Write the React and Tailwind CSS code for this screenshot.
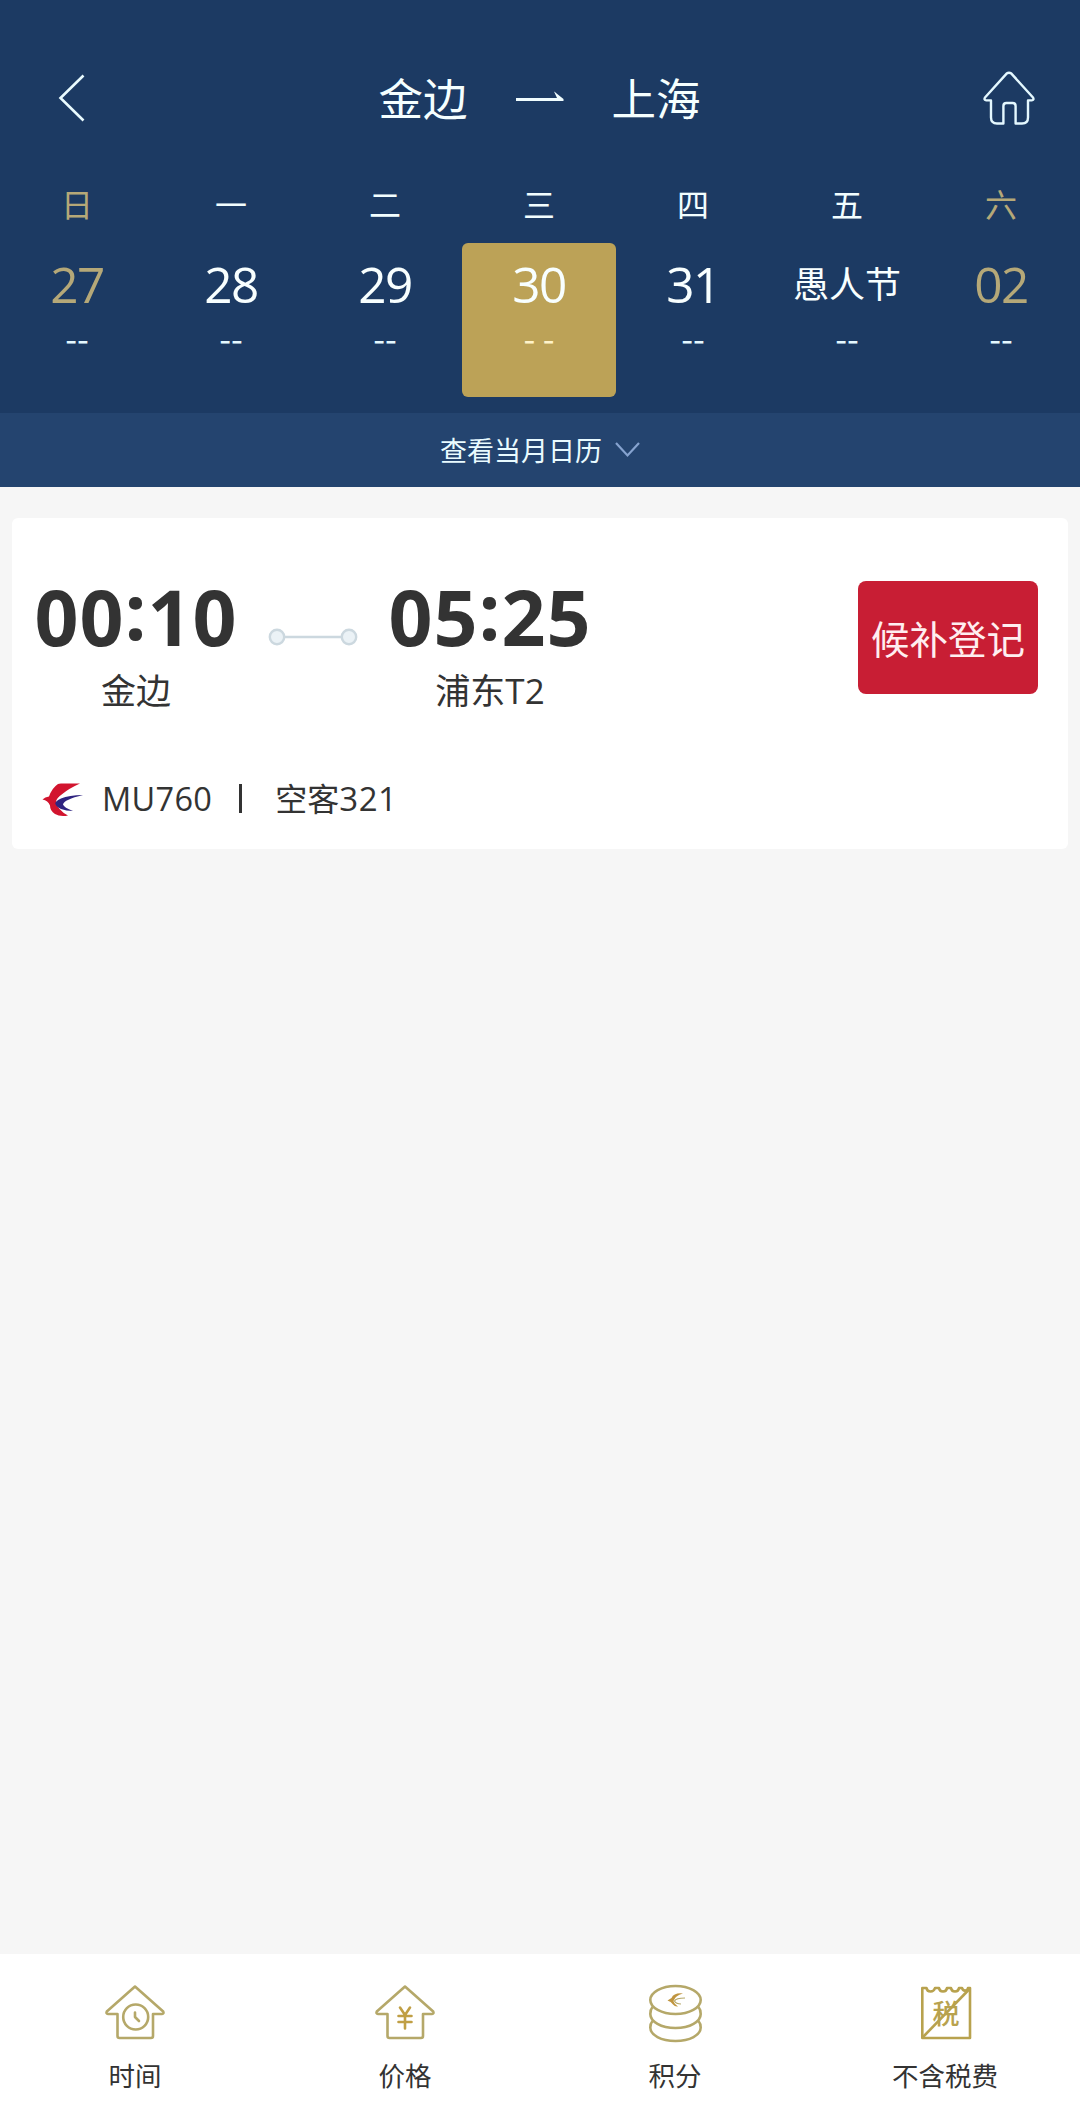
import React from 'react';

const days = [
    { week: '日', date: '27', price: '--', weekend: true },
    { week: '一', date: '28', price: '--' },
    { week: '二', date: '29', price: '--' },
    { week: '三', date: '30', price: '- -', selected: true },
    { week: '四', date: '31', price: '--' },
    { week: '五', date: '愚人节', price: '--', holiday: true },
    { week: '六', date: '02', price: '--', weekend: true },
];

const BackIcon = () => (
    <svg width="28" height="48" viewBox="0 0 28 48" fill="none" stroke="#e9fbff" strokeWidth="2.6">
        <path d="M26.5 1.5 3.500 24 26.500 46.500" />
    </svg>
);

const HomeIcon = () => (
    <svg width="52" height="54" viewBox="0 0 52 54" fill="none" stroke="#e4f8ff" strokeWidth="2.4" strokeLinejoin="round">
        <path d="M23.6 2.6Q26 .9 28.4 2.6L50 26.500Q51.4 29 48.6 29.400H45V46.500Q45 52.500 39 52.500H32.6V35Q32.6 32 29.6 32H23.4Q20.4 32 20.4 35V52.500H14Q8 52.500 8 46.500V29.400H3.4Q.6 29 2 26.500Z" />
    </svg>
);

const ArrowIcon = () => (
    <svg width="48" height="20" viewBox="0 0 48 20" fill="none" stroke="#f0fdff" strokeWidth="3">
        <path d="M0 11.5H45" />
        <path d="M38 3.500Q39.500 4 40 5L47.500 11V13H38.500L41 10Z" fill="#f0fdff" stroke="none" />
    </svg>
);

const RouteLine = () => (
    <svg width="90" height="18" viewBox="0 0 90 18" stroke="#ccd8df" strokeWidth="2.4" fill="#ebf2f6">
        <path d="M16 9H74" />
        <circle cx="9" cy="9" r="7.2" />
        <circle cx="81" cy="9" r="7.2" />
    </svg>
);

const AirlineLogo = () => (
    <svg className="mt-[2px]" width="42" height="35" viewBox="0 0 42 35">
        <path d="M16 2Q17 1.500 19 1.500H38Q27 6.500 21 11.500Q14.500 16 14 19.500Q15.500 28 26 33.500Q18 35 13 32Q8 29 8 23.500Q6 18.500 .5 17.500Q3 15 7 14.500Q10 6 16 2Z" fill="#d2142e" />
        <path d="M41 13Q27 13 19 16.500Q13.500 19 13.200 21.500Q14 24.500 19 27Q24 28.800 31 29Q22 25.500 21 22.500Q22 17.500 41 13Z" fill="#2f2480" />
    </svg>
);

const HouseOutline = ({ children }) => (
    <svg width="60" height="60" viewBox="0 0 60 60" fill="none" stroke="#b5a869" strokeWidth="2.6" strokeLinejoin="round" strokeLinecap="round">
        <path d="M30 2.500 1.800 27.500Q.8 29.800 3 30H12.500V52Q12.500 54 14.500 54H46Q48 54 48 52V30H57Q59.200 29.800 58.200 27.500Z" />
        {children}
    </svg>
);

const TimeIcon = () => (
    <HouseOutline>
        <circle cx="30.700" cy="33" r="12.500" />
        <path d="M30 28.500V33L34 37" />
    </HouseOutline>
);

const PriceIcon = () => (
    <HouseOutline>
        <path d="M25 23.500 30 31 35 23.500M30 31V44.500M23.500 32H36.500M23.500 38H36.500" stroke="#c09f45" />
    </HouseOutline>
);

const PointsIcon = () => (
    <svg width="60" height="60" viewBox="0 0 60 60" fill="none" stroke="#b5a869" strokeWidth="2.600">
        <ellipse cx="30.500" cy="16" rx="25.200" ry="14" />
        <path d="M7.500 23Q5.300 25.500 5.300 30C5.300 37.500 16 44 30.500 44S55.700 37.500 55.700 30Q55.700 25.500 53.500 23" />
        <path d="M7.500 37Q5.300 39.500 5.300 43.500C5.300 51 16 57 30.500 57S55.700 51 55.700 43.500Q55.700 39.500 53.500 37" />
        <path d="M38 9.500Q29 8.500 26.500 14L22.500 16.500Q26 17.500 28 20.500Q30 23 33 22.500Q29 19.500 28.500 17Q30 11.500 38 9.500Z" fill="#c0953f" stroke="none" />
        <path d="M40 14Q31 14 29.500 17Q31 20 36 20" strokeWidth="1.200" />
    </svg>
);

const TaxIcon = () => (
    <svg width="60" height="60" viewBox="0 0 60 60" fill="none" stroke="#b8a24e" strokeWidth="2.600" strokeLinejoin="round">
        <path d="M7.300 54V4H11.500Q12 7.500 15.500 7.500T20 4H24Q24.500 7.500 28 7.500T32 4H36Q36.500 7.500 40 7.500T44 4H47Q48 7 50.500 6.500T53 4H55V54Z" />
        <path d="M8 53 54 5.500" />
        <text x="31" y="40" textAnchor="middle" fontSize="27" fontWeight="500" fill="#b8a24e" stroke="none">税</text>
    </svg>
);

const tabs = [
    { label: '时间', Icon: TimeIcon },
    { label: '价格', Icon: PriceIcon },
    { label: '积分', Icon: PointsIcon },
    { label: '不含税费', Icon: TaxIcon },
];

const DayCell = ({ day }) => (
    <div className="flex flex-col items-center">
        <div className={`h-[50px] leading-[46px] text-[32px] ${day.weekend ? 'text-[#b5a878]' : 'text-[#f2feff]'}`}>
            {day.week}
        </div>
        <div className={`mt-[13px] pt-[6px] w-full h-[154px] rounded-md flex flex-col items-center ${day.selected ? 'bg-[#bca257]' : ''}`}>
            <div
                className={`h-[70px] whitespace-nowrap ${day.holiday ? 'text-[36px] leading-[66px]' : "text-[49.5px] leading-[70px] tracking-[-1.6px] font-['Open_Sans',sans-serif]"} ${day.weekend ? 'text-[#b5a878]' : 'text-[#f8ffff]'}`}
            >
                {day.date}
            </div>
            <div className={`h-[38px] leading-[38px] text-[34px] font-['Noto_Sans_CJK_SC',sans-serif] ${day.selected ? 'text-[#fff3c9]' : 'text-[#e4f8ff]'}`}>
                {day.price}
            </div>
        </div>
    </div>
);

// One end of the flight: time on top, airport below
const Stop = ({ hour, minute, place, terminal }) => (
    <div className="w-[204px] flex flex-col items-center">
        <div className="h-[80px] leading-[85px] text-[77px] font-bold flex tracking-[1px] font-['Open_Sans',sans-serif]">
            <span>{hour}</span>
            <span className="relative -top-[6px]">:</span>
            <span>{minute}</span>
        </div>
        <div className="mt-[10px] h-[50px] leading-[50px] text-[35px]">
            {place}
            {terminal && <span className="font-['Open_Sans',sans-serif]">{terminal}</span>}
        </div>
    </div>
);

const App = () => {
    return (
    <div className="w-[1080px] h-[2104px] flex flex-col bg-[#f6f6f6] text-[#333333] font-['Noto_Sans_CJK_SC',sans-serif]">
        <header className="bg-[#1c3a63]">
            <div className="h-[180px] pt-[16px] pl-[57px] pr-[45px] grid grid-cols-[1fr_auto_1fr] items-center">
                <button className="justify-self-start"><BackIcon /></button>
                <div className="-ml-[13px] flex items-center gap-[48px] text-[44.5px] leading-[64px] text-[#f5ffff]">
                    <span className="-mt-[2px]">金边</span>
                    <ArrowIcon />
                    <span className="-mt-[2px]">上海</span>
                </div>
                <button className="justify-self-end"><HomeIcon /></button>
            </div>
            <div className="grid grid-cols-7 pb-[16px] mr-[2px]">
                {days.map((day) => (
                    <DayCell key={day.week} day={day} />
                ))}
            </div>
            <button className="w-full h-[74px] bg-[#24446f] flex items-center justify-center gap-[13px] text-[27px] text-[#e9fbff]">
                <span>查看当月日历</span>
                <svg width="25" height="16" viewBox="0 0 25 16" fill="none" stroke="#86a3cf" strokeWidth="2.2">
                    <path d="M1 1 12.500 13.500 24 1" />
                </svg>
            </button>
        </header>

        <main className="flex-1 px-[12px] pt-[31px]">
            <div className="h-[331px] rounded-md bg-white pl-[22px] pr-[30px] pt-[56px]">
                <div className="flex items-start">
                    <Stop hour="00" minute="10" place="金边" />
                    <div className="mt-[54px] w-[150px] flex justify-center"><RouteLine /></div>
                    <Stop hour="05" minute="25" place="浦东" terminal="T2" />
                    <button className="ml-auto mt-[7px] w-[180px] h-[113px] rounded-lg bg-[#c81e34] text-[38.5px] text-[#ffeef0] whitespace-nowrap">
                        候补登记
                    </button>
                </div>
                <div className="mt-[60px] pl-[8px] flex items-center text-[32px] leading-[48px]">
                    <AirlineLogo />
                    <span className="mt-[1px] ml-[18px] text-[32.5px] tracking-[0.3px] font-['Open_Sans',sans-serif]">MU760</span>
                    <span className="ml-[27px] w-[3px] h-[29px] bg-[#333333]" />
                    <span className="-mt-[1px] ml-[33px]">
                        空客<span className="text-[33px] tracking-[0.6px] font-['Open_Sans',sans-serif]">321</span>
                    </span>
                </div>
            </div>
        </main>

        <nav className="h-[150px] bg-white grid grid-cols-4 pt-[30px]">
            {tabs.map(({ label, Icon }) => (
                <button key={label} className="flex flex-col items-center">
                    <Icon />
                    <span className="mt-[11px] text-[26.5px] leading-[40px]">{label}</span>
                </button>
            ))}
        </nav>
    </div>
    );
};

export default App;
